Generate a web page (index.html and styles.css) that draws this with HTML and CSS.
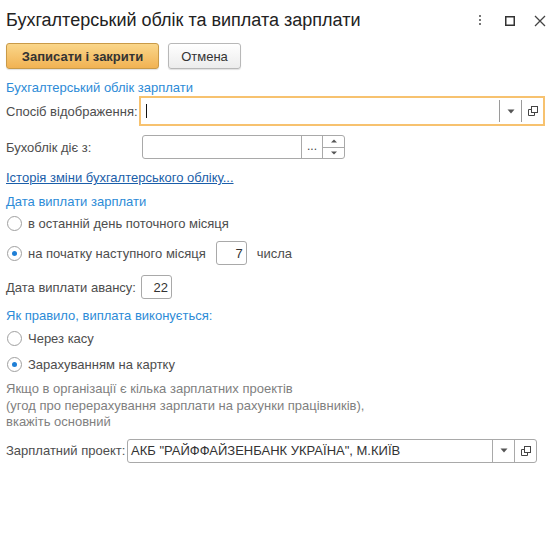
FILE: index.html
```html
<!DOCTYPE html>
<html lang="uk">
<head>
<meta charset="utf-8">
<title>Бухгалтерський облік та виплата зарплати</title>
<link rel="stylesheet" href="styles.css">
</head>
<body>
<div class="window">
  <div class="header">
    <div class="title">Бухгалтерський облік та виплата зарплати</div>
    <div class="win-icons">
      <svg class="ico" width="12" height="14" viewBox="0 0 12 14"><rect x="5" y="1" width="2" height="2" fill="#777"/><rect x="5" y="5" width="2" height="2" fill="#777"/><rect x="5" y="9" width="2" height="2" fill="#777"/></svg>
      <svg class="ico" width="12" height="14" viewBox="0 0 12 14"><rect x="1.75" y="2.75" width="8.5" height="8.5" fill="none" stroke="#333" stroke-width="1.5"/></svg>
      <svg class="ico" width="12" height="14" viewBox="0 0 12 14"><path d="M1 2 L11 12 M11 2 L1 12" stroke="#444" stroke-width="1.3"/></svg>
    </div>
  </div>

  <div class="toolbar">
    <button class="btn btn-primary">Записати і закрити</button>
    <button class="btn">Отмена</button>
  </div>

  <div class="group-title g1">Бухгалтерський облік зарплати</div>

  <div class="row r-sposib">
    <div class="label w-sposib">Спосіб відображення:</div>
    <div class="field focused f-sposib">
      <div class="val"><span class="caret"></span></div>
      <div class="fbtn"><svg width="8" height="5" viewBox="0 0 8 5"><path d="M0.5 0.5 H7.5 L4 4.5 Z" fill="#555"/></svg></div>
      <div class="fbtn"><svg width="12" height="12" viewBox="0 0 12 12"><rect x="4.5" y="1.5" width="6" height="6" fill="none" stroke="#444"/><path d="M4.5 4.5 H1.5 V10.5 H7.5 V7.5" fill="none" stroke="#444"/></svg></div>
    </div>
  </div>

  <div class="row r-buh">
    <div class="label w-buh">Бухоблік діє з:</div>
    <div class="field f-buh">
      <div class="val"></div>
      <div class="fbtn dots">...</div>
      <div class="spin">
        <div class="spin-half"><svg width="6" height="4" viewBox="0 0 6 4"><path d="M0 3.5 H6 L3 0.5 Z" fill="#555"/></svg></div>
        <div class="spin-half low"><svg width="6" height="4" viewBox="0 0 6 4"><path d="M0 0.5 H6 L3 3.5 Z" fill="#555"/></svg></div>
      </div>
    </div>
  </div>

  <div class="link-row"><a class="link" href="#">Історія зміни бухгалтерського обліку...</a></div>

  <div class="group-title g2">Дата виплати зарплати</div>

  <div class="radio-row rr1"><span class="radio"></span><span class="rtext">в останній день поточного місяця</span></div>
  <div class="radio-row rr2"><span class="radio on"></span><span class="rtext">на початку наступного місяця</span><div class="field num n7">7</div><span class="after">числа</span></div>

  <div class="row r-avans">
    <div class="label w-avans">Дата виплати авансу:</div>
    <div class="field num n22">22</div>
  </div>

  <div class="group-title g3">Як правило, виплата виконується:</div>

  <div class="radio-row rr3"><span class="radio"></span><span class="rtext">Через касу</span></div>
  <div class="radio-row rr4"><span class="radio on"></span><span class="rtext">Зарахуванням на картку</span></div>

  <div class="info">Якщо в організації є кілька зарплатних проектів<br>(угод про перерахування зарплати на рахунки працівників),<br>вкажіть основний</div>

  <div class="row r-zp">
    <div class="label w-zp">Зарплатний проект:</div>
    <div class="field f-zp">
      <div class="val text">АКБ "РАЙФФАЙЗЕНБАНК УКРАЇНА", М.КИЇВ</div>
      <div class="fbtn"><svg width="8" height="5" viewBox="0 0 8 5"><path d="M0.5 0.5 H7.5 L4 4.5 Z" fill="#555"/></svg></div>
      <div class="fbtn"><svg width="12" height="12" viewBox="0 0 12 12"><rect x="4.5" y="1.5" width="6" height="6" fill="none" stroke="#444"/><path d="M4.5 4.5 H1.5 V10.5 H7.5 V7.5" fill="none" stroke="#444"/></svg></div>
    </div>
  </div>
</div>
</body>
</html>
```

FILE: styles.css
```css
html, body {
  margin: 0;
  padding: 0;
  background: #fff;
}
body {
  font-family: "Liberation Sans", Arial, sans-serif;
  font-size: 13px;
  color: #4d4d4d;
}
.window {
  display: flex;
  flex-direction: column;
  padding: 0 6px;
}
.header {
  height: 40px;
  display: flex;
  align-items: center;
  justify-content: space-between;
}
.title {
  font-size: 18px;
  color: #222;
  padding-top: 1px;
}
.win-icons {
  display: flex;
  align-items: center;
  gap: 18px;
  margin-right: 5px;
  padding-top: 1px;
}
.ico { display: block; }
.toolbar {
  margin-top: 3px;
  height: 26px;
  display: flex;
  gap: 9px;
}
.btn {
  font-family: "Liberation Sans", Arial, sans-serif;
  font-size: 13px;
  color: #333;
  height: 26px;
  padding: 0 12px;
  border: 1px solid #b8b8b8;
  border-radius: 3px;
  background: linear-gradient(#ffffff, #ececec);
  box-shadow: 0 1px 1px rgba(0,0,0,0.12);
  width: 73px;
}
.btn-primary {
  width: 153px;
  font-weight: bold;
  border-color: #c99a48;
  background: linear-gradient(#fad68a, #f1b253);
}
.group-title {
  color: #2d8bd7;
  height: 15px;
  line-height: 15px;
}
.g1 { margin-top: 11px; }
.g2 { margin-top: 8px; height: 16px; line-height: 16px; }
.g3 { margin-top: 9px; height: 16px; line-height: 16px; }
.row {
  display: flex;
  align-items: center;
}
.label { flex: none; }
.w-sposib { width: 133px; }
.w-buh { width: 136px; }
.w-avans { width: 135px; }
.w-zp { width: 121px; }
.field {
  box-sizing: border-box;
  height: 24px;
  border: 1px solid #a9a9a9;
  border-radius: 3px;
  display: flex;
  background: #fff;
}
.field .val {
  flex: 1;
  display: flex;
  align-items: center;
}
.field .val.text {
  color: #333;
  padding-left: 3px;
}
.fbtn {
  width: 21px;
  flex: none;
  border-left: 1px solid #a9a9a9;
  display: flex;
  align-items: center;
  justify-content: center;
}
.r-sposib { margin-top: 1px; height: 30px; }
.focused {
  height: 30px;
  border: 2px solid #f7c26f;
  border-radius: 0;
}
.focused .fbtn {
  margin: 2px 0;
  border-left-color: #9a9a9a;
}
.f-sposib { width: 406px; }
.caret {
  display: block;
  width: 1px;
  height: 14px;
  background: #111;
  margin-left: 5px;
}
.r-buh { margin-top: 9px; height: 24px; }
.f-buh { width: 203px; }
.dots {
  color: #444;
  font-size: 12px;
  align-items: flex-end;
  padding-bottom: 5px;
  box-sizing: border-box;
}
.spin {
  width: 21px;
  border-left: 1px solid #a9a9a9;
  display: flex;
  flex-direction: column;
}
.spin-half {
  flex: 1;
  display: flex;
  align-items: center;
  justify-content: center;
}
.spin-half.low { border-top: 1px solid #a9a9a9; }
.link-row {
  margin-top: 11px;
  height: 16px;
  line-height: 16px;
}
.link {
  color: #1a5ea9;
  text-decoration: underline;
}
.radio-row {
  display: flex;
  align-items: center;
  height: 20px;
}
.radio {
  box-sizing: border-box;
  width: 15px;
  height: 15px;
  border: 1px solid #a0a0a0;
  border-radius: 50%;
  margin-left: 1px;
  margin-right: 6px;
  display: flex;
  align-items: center;
  justify-content: center;
  background: #fff;
}
.radio.on::after {
  content: "";
  width: 5px;
  height: 5px;
  border-radius: 50%;
  background: #1f7fd6;
}
.rr1 { margin-top: 3px; }
.rr2 { margin-top: 8px; height: 24px; }
.rr3 { margin-top: 4px; }
.rr4 { margin-top: 6px; }
.num {
  align-items: center;
  justify-content: flex-end;
  padding-right: 3px;
  color: #333;
}
.n7 { width: 31px; margin-left: 10px; }
.after { margin-left: 10px; }
.r-avans { margin-top: 10px; height: 24px; }
.n22 { width: 31px; }
.info {
  margin-top: 7px;
  color: #7f7f7f;
  line-height: 16.5px;
}
.r-zp { margin-top: 8px; height: 24px; }
.f-zp { width: 410px; }
```
